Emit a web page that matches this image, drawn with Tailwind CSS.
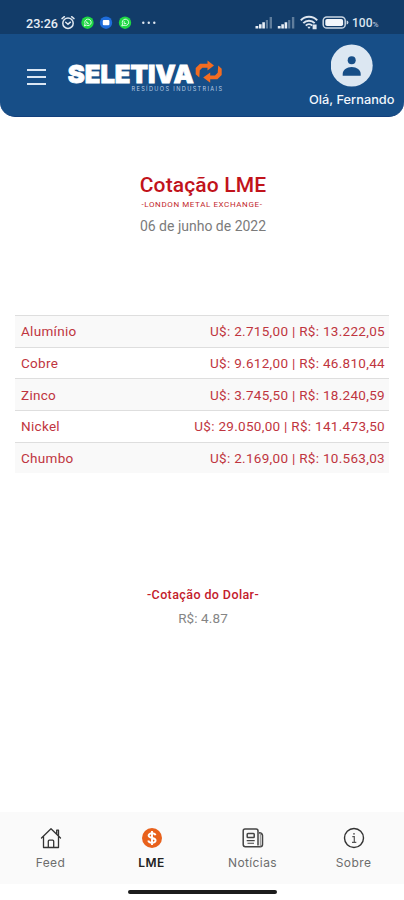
<!DOCTYPE html>
<html lang="pt-BR">
<head>
    <meta charset="UTF-8">
    <meta name="viewport" content="width=device-width, initial-scale=1.0">
    <title>Cotação LME</title>
    <script src="https://cdn.jsdelivr.net/npm/@tailwindcss/browser@4"></script>
</head>
<body class="bg-white font-['Roboto',sans-serif]">
    <div class="flex flex-col w-[404px] h-[900px] overflow-hidden">

        <!-- Status bar -->
        <div class="h-[34px] shrink-0 bg-[#123c69] text-white">
            <svg class="block" width="404" height="34" viewBox="0 0 404 34" fill="none">
                <text x="26" y="27.5" textLength="32" lengthAdjust="spacingAndGlyphs" font-family="Roboto, sans-serif" font-size="13.5" font-weight="500" fill="#e8eef5">23:26</text>
                <!-- alarm -->
                <g stroke="#dfe7f0" stroke-width="1.5" stroke-linecap="round">
                    <circle cx="68" cy="23.2" r="5.2"/>
                    <path d="M62 18.6l2.4-1.9M74 18.6l-2.4-1.9M65.7 22.2l2.3 2 2.4-2"/>
                </g>
                <!-- notifications -->
                <circle cx="87.5" cy="22.7" r="6.2" fill="#1fd844"/>
                <path d="M84.3 26l.8-2.2a3.2 3.2 0 1 1 1.4 1.4z" stroke="#d9ffe2" stroke-width="1"/>
                <path d="M86.4 21.5q.5 1.9 2.3 2.3" stroke="#d9ffe2" stroke-width="1.1"/>
                <circle cx="106" cy="22.7" r="6.2" fill="#1e6ddb"/>
                <rect x="102.8" y="20" width="6.6" height="5.2" rx="1" fill="#fff"/>
                <circle cx="125" cy="22.7" r="6.2" fill="#1fd844"/>
                <path d="M121.8 26l.8-2.2a3.2 3.2 0 1 1 1.4 1.4z" stroke="#d9ffe2" stroke-width="1"/>
                <path d="M124.2 21.2v2.4h2" stroke="#d9ffe2" stroke-width="1"/>
                <g fill="#dfe7f0"><circle cx="143.3" cy="22.7" r="1.2"/><circle cx="148.8" cy="22.7" r="1.2"/><circle cx="154.3" cy="22.7" r="1.2"/></g>
                <!-- signal -->
                <g fill="#e8eef5">
                    <path d="M255.5 26h2.8v2.5h-2.8zM259 24.3h2.6v4.2H259zM262.3 22.3h2.6v6.2h-2.6z"/>
                    <path d="M277.8 26h2.8v2.5h-2.8zM281.3 24.3h2.6v4.2h-2.6zM284.6 22.3h2.6v6.2h-2.6z"/>
                </g>
                <path d="M265.8 20h2.2v8.5h-2.2zM269.6 17h2.4v11.5h-2.4zM288.1 20h2.2v8.5h-2.2zM291.9 17h2.4v11.5h-2.4z" fill="#5f7d9c"/>
                <!-- wifi -->
                <g stroke="#dfe7f0" stroke-width="2">
                    <path d="M300.8 20.4a11.2 11.2 0 0 1 16.4 0M303.3 23.1a8 8 0 0 1 11.4 0M305.8 25.6a4.6 4.6 0 0 1 6.4 0"/>
                </g>
                <path d="M309 29l-1.7-2.2h3.4zM312.6 24.5h4v4.8h-4z" fill="#dfe7f0"/>
                <!-- battery -->
                <rect x="323.2" y="17" width="22" height="11" rx="3.6" stroke="#c9d5e2" stroke-width="1.5"/>
                <rect x="325.3" y="19" width="17.8" height="7" rx="1.8" fill="#f3f6fa"/>
                <path d="M346.6 20.5q1.8 0 1.8 2t-1.8 2z" fill="#c9d5e2"/>
                <text x="352" y="27" textLength="20.5" lengthAdjust="spacingAndGlyphs" font-family="Roboto, sans-serif" font-size="12.5" font-weight="500" fill="#dbe4ee">100</text>
                <text x="372.5" y="27" textLength="6" lengthAdjust="spacingAndGlyphs" font-family="Roboto, sans-serif" font-size="8" fill="#c9d5e2">%</text>
            </svg>
        </div>

        <!-- Header -->
        <header class="shrink-0 flex h-[83px] bg-[#174e87] rounded-b-[15px] border-b border-[#123f7c]">
            <button class="ml-[27px] mt-[35px] flex flex-col gap-[5px] w-[19px] h-4" aria-label="Menu">
                <span class="block w-full h-[2px] bg-[#dbe6f3]"></span>
                <span class="block w-full h-[2px] bg-[#dbe6f3]"></span>
                <span class="block w-full h-[2px] bg-[#dbe6f3]"></span>
            </button>
            <svg class="ml-[20px] mt-[22px] shrink-0" width="160" height="40" viewBox="66 56 160 40">
                <text x="67.8" y="82.6" textLength="126" lengthAdjust="spacingAndGlyphs" font-family="Inter, sans-serif" font-size="25" font-weight="900" fill="#fff" stroke="#fff" stroke-width=".8">SELETIVA</text>
                <text x="131.5" y="91.3" textLength="90.5" font-family="Inter, sans-serif" font-size="5.6" fill="#b9cde3">RESÍDUOS INDUSTRIAIS</text>
                <!-- recycling arrows -->
                <path d="M199.3 77.5l-3.6-3.2V68l4.3-4.3h7.5v-3.2l6.5 4.9-6.5 5v-2.7h-5.2l-2.5 2.5z" fill="#f36c21"/>
                <path d="M218.2 65.5l3.5 3.2V75l-4.3 4.3h-7.2v3.5l-7-5.2 7-5.1v2.9h4.8l2.7-2.6z" fill="#f36c21"/>
            </svg>
            <div class="ml-auto mr-[9px] mt-[10px] flex flex-col items-center">
                <svg width="43" height="43" viewBox="0 0 43 43">
                    <circle cx="20.7" cy="21.5" r="21" fill="#dce7f2"/>
                    <circle cx="20.7" cy="16.3" r="4" fill="#174e87"/>
                    <path d="M11.7 31.7v-1.6c0-4 4-7 9-7s9 3 9 7v1.6z" fill="#174e87"/>
                </svg>
                <svg class="mt-1" width="86" height="17" viewBox="0 0 86 17">
                    <text x="0" y="12.5" textLength="85.5" lengthAdjust="spacingAndGlyphs" font-family="Inter, sans-serif" font-size="12" font-weight="500" fill="#f1f6fc">Olá, Fernando</text>
                </svg>
            </div>
        </header>

        <!-- Quotes -->
        <main class="grow flex flex-col items-center">
            <h1 class="mt-[54px] ml-[2px] text-[21px] leading-[28px] font-medium tracking-[0.15px] text-[#c1131b]">Cotação LME</h1>
            <p class="text-[8px] leading-[12px] tracking-[0.6px] text-[#c21f2b]">-LONDON METAL EXCHANGE-</p>
            <p class="mt-[6px] ml-[2px] text-[14px] leading-[18px] text-[#7b7b7b]">06 de junho de 2022</p>

            <ul class="mt-[80px] w-[374px] text-[13.5px] tracking-[0.3px] text-[#bf3540]">
                <li class="flex justify-between items-center h-[31.7px] pl-1.5 pr-1 border-t border-[#dedede] bg-[#f9f9f9]"><span>Alumínio</span><span>U$: 2.715,00 | R$: 13.222,05</span></li>
                <li class="flex justify-between items-center h-[31.7px] pl-1.5 pr-1 border-t border-[#dedede]"><span>Cobre</span><span>U$: 9.612,00 | R$: 46.810,44</span></li>
                <li class="flex justify-between items-center h-[31.7px] pl-1.5 pr-1 border-t border-[#dedede] bg-[#f9f9f9]"><span>Zinco</span><span>U$: 3.745,50 | R$: 18.240,59</span></li>
                <li class="flex justify-between items-center h-[31.7px] pl-1.5 pr-1 border-t border-[#dedede]"><span>Nickel</span><span>U$: 29.050,00 | R$: 141.473,50</span></li>
                <li class="flex justify-between items-center h-[31.7px] pl-1.5 pr-1 border-t border-[#dedede] bg-[#f9f9f9]"><span>Chumbo</span><span>U$: 2.169,00 | R$: 10.563,03</span></li>
            </ul>

            <h2 class="mt-[114px] ml-[2px] text-[12.5px] leading-4 font-medium tracking-[0.4px] text-[#c3202b]">-Cotação do Dolar-</h2>
            <p class="mt-[7px] ml-[2px] text-[13.5px] leading-4 tracking-[0.1px] text-[#858585]">R$: 4.87</p>
        </main>

        <!-- Bottom navigation -->
        <nav class="shrink-0 grid grid-cols-4 h-[72px] bg-[#fafafa] font-['Inter',sans-serif] text-[12px] leading-4 tracking-[0.4px] text-[#6d6d6d]">
            <a class="flex flex-col items-center pt-[15px] gap-[6px]">
                <svg width="22" height="22" viewBox="0 0 22 22" fill="none" stroke="#333" stroke-width="1.3" stroke-linejoin="round" stroke-linecap="round">
                    <path d="M1.5 11L11 1.8 20.5 11M3.5 9.4v11.1h15V9.4M16.7 7V3.2h1.8v5.5M8.3 20.3v-6.1q0-1 1-1h3.4q1 0 1 1v6.1"/>
                </svg>
                <span>Feed</span>
            </a>
            <a class="flex flex-col items-center pt-[15px] gap-[6px]">
                <svg width="22" height="22" viewBox="0 0 22 22" fill="none">
                    <circle cx="11" cy="11" r="10" fill="#e8611c"/>
                    <path d="M14.5 8.3C14.1 6.9 12.8 6.3 11 6.3c-2 0-3.4.9-3.4 2.3 0 3.3 7 1.4 7 4.7 0 1.5-1.5 2.5-3.6 2.5-2 0-3.4-.8-3.8-2.3M11 4v14" stroke="#fff" stroke-width="1.9"/>
                </svg>
                <span class="font-semibold text-[#222]">LME</span>
            </a>
            <a class="flex flex-col items-center pt-[15px] gap-[6px]">
                <svg width="22" height="22" viewBox="0 0 22 22" fill="none" stroke="#444" stroke-width="1.5" stroke-linejoin="round">
                    <path d="M16 18.5V4q0-2-2-2H3Q1.2 2 1.2 4v13.5q0 2.2 2.2 2.2h14.9q2.2 0 2.2-2.2V8.5q0-2.5-3.5-2.8"/>
                    <path d="M18.3 6v13.5" stroke-width="1" stroke="#888"/>
                    <rect x="5.2" y="6.5" width="7" height="4" rx=".8"/>
                    <path d="M4.7 13.6h8M5.5 16.3h6.5" stroke-width="1.1"/>
                </svg>
                <span>Notícias</span>
            </a>
            <a class="flex flex-col items-center pt-[15px] gap-[6px]">
                <svg width="22" height="22" viewBox="0 0 22 22" fill="none" stroke="#333" stroke-width="1.4">
                    <circle cx="11" cy="11" r="9.5"/>
                    <path d="M9.3 9.7h2v5.5M9 15.3h4.3" stroke="#555" stroke-width="1.2"/>
                    <circle cx="11" cy="6.8" r=".9" fill="#555" stroke="none"/>
                </svg>
                <span>Sobre</span>
            </a>
        </nav>
        <div class="shrink-0 h-4 flex justify-center pt-[6px]">
            <div class="w-[149px] h-[4px] rounded-full bg-[#1c1c1c]"></div>
        </div>
    </div>
</body>
</html>
